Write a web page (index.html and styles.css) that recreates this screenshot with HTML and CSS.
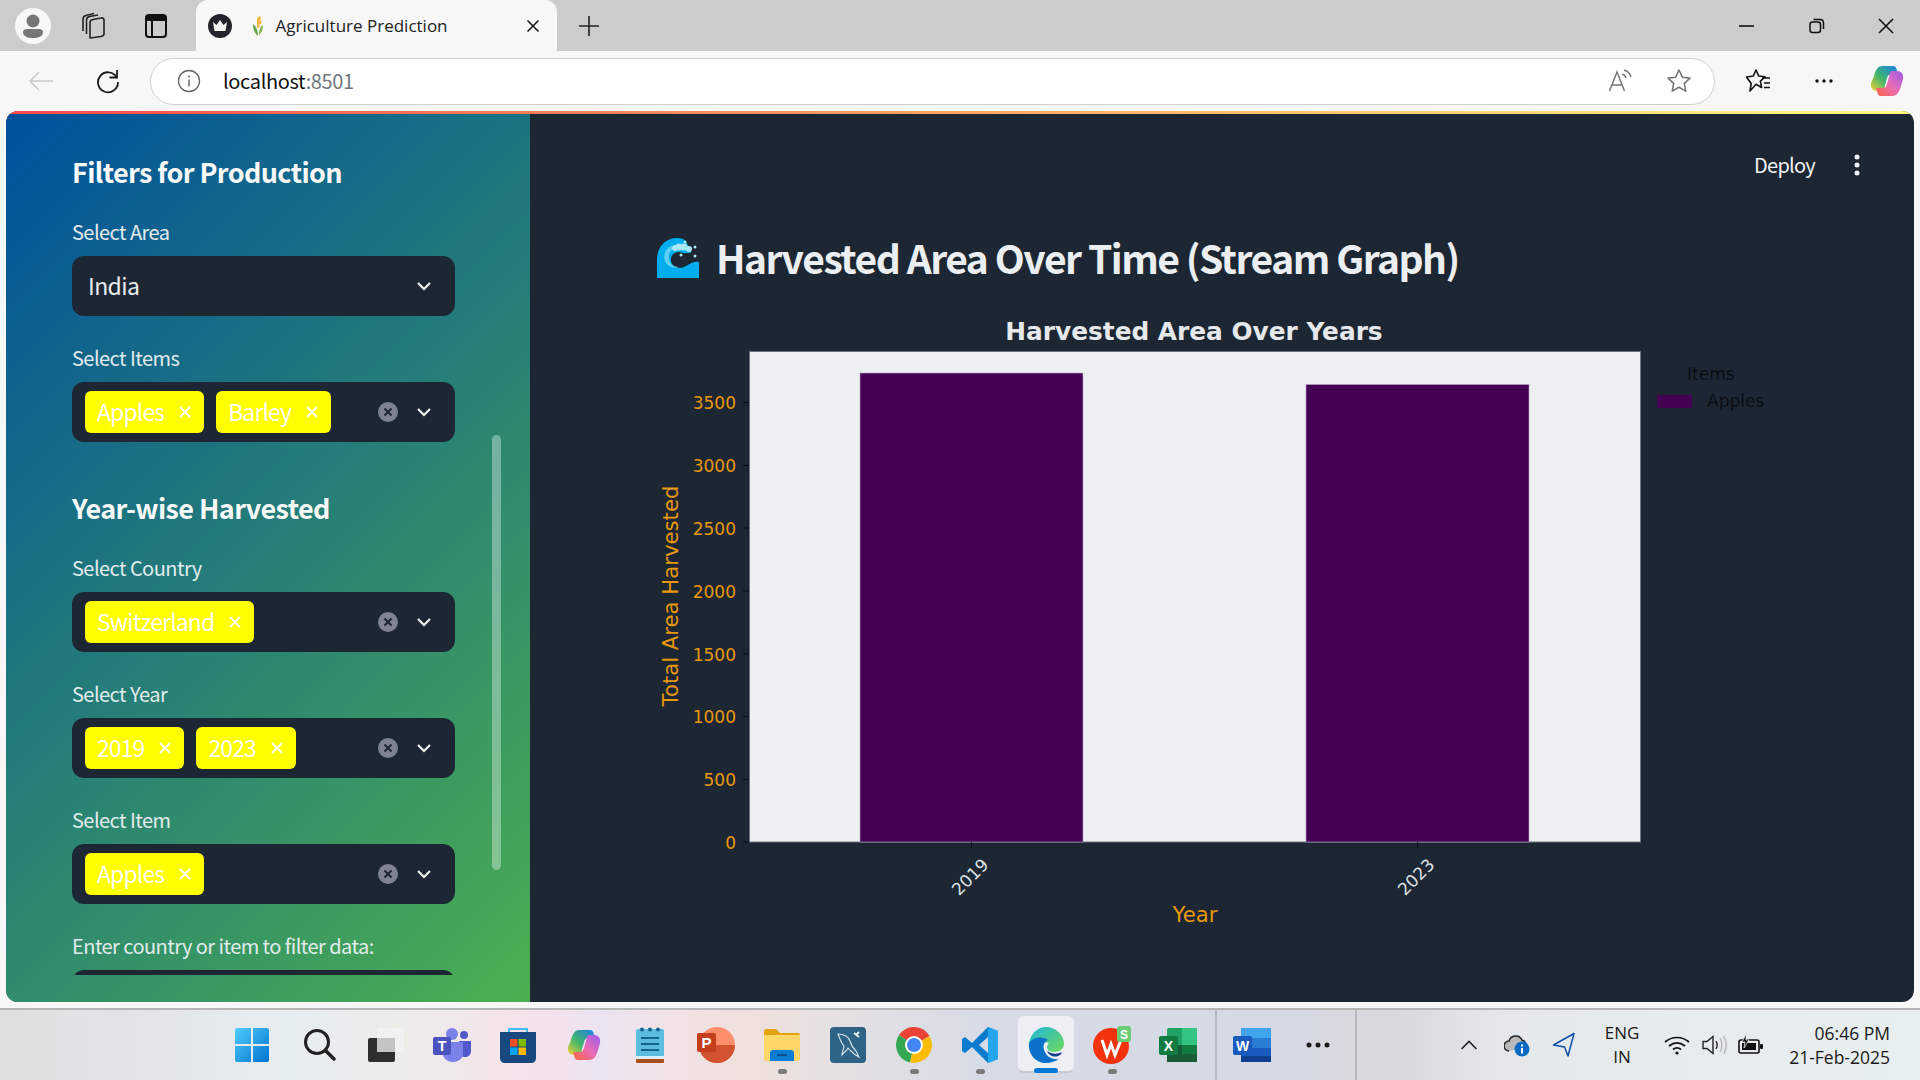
FILE: index.html
```html
<!DOCTYPE html>
<html lang="en">
<head>
    <meta charset="UTF-8">
    <meta name="viewport" content="width=device-width, initial-scale=1.0">
    <title>Agriculture Prediction</title>
    <link rel="stylesheet" href="styles.css">
</head>
<body>
    <!-- browser tab strip -->
    <div class="tabstrip">
        <div class="slot slot-avatar">
            <svg width="36" height="36" viewBox="0 0 36 36"><circle cx="18" cy="18" r="18" fill="#f7f7f7"/><circle cx="18" cy="13" r="6.5" fill="#777"/><path d="M8 24c0-2 2-3 4-3h12c2 0 4 1 4 3 0 4-4 6-10 6s-10-2-10-6z" fill="#777"/></svg>
        </div>
        <div class="slot slot-collections">
            <svg width="26" height="28" viewBox="0 0 26 28" fill="none" stroke="#222" stroke-width="1.6" stroke-linejoin="round"><path d="M10 26l11-1.5c2-.3 3-1.5 3-3V8c0-1.5-1.5-2.500-3-2l-8 1.5c-2 .4-3 1.500-3 3z"/><path d="M6.5 22V8c0-2 1-3 3-3.500L18 3"/><path d="M3 19V7c0-2 1-3 3-3.500L14 1.5"/></svg>
        </div>
        <div class="slot slot-panel">
            <svg width="24" height="26" viewBox="0 0 24 26"><rect x="2" y="2" width="20" height="22" rx="3" fill="none" stroke="#111" stroke-width="2"/><rect x="2" y="2" width="20" height="6" fill="#111"/><path d="M8 8v16" stroke="#111" stroke-width="2"/></svg>
        </div>
        <div class="tab">
            <svg class="tab-crown" width="24" height="24" viewBox="0 0 24 24"><circle cx="12" cy="12" r="12" fill="#23252e"/><path d="M5 8l3.5 3L12 6l3.5 5L19 8l-1.5 9h-11z" fill="#f2f2f2"/></svg>
            <svg class="tab-favicon" width="14" height="22" viewBox="0 0 14 22"><path d="M7 21C3 18 2 13 2 9c3 2 5 6 5 12z" fill="#6aa84f"/><path d="M8 20c3-3 4-6 4-10-3 2-4 5-4 10z" fill="#7cb342"/><path d="M6 13V3l3-2 1 3-1 2 2 0-1 3-2 1 1 1-1 2z" fill="#f4b942"/></svg>
            <span class="tab-title">Agriculture Prediction</span>
            <span class="tab-close">
                <svg width="14" height="14" viewBox="0 0 14 14"><path d="M1.5 1.5l11 11M12.5 1.5l-11 11" stroke="#111" stroke-width="1.5"/></svg>
            </span>
        </div>
        <div class="slot slot-new">
            <svg width="22" height="22" viewBox="0 0 22 22"><path d="M11 1v20M1 11h20" stroke="#222" stroke-width="1.6"/></svg>
        </div>
        <div class="spacer"></div>
        <div class="slot slot-win">
            <svg width="16" height="16" viewBox="0 0 16 16"><path d="M0 8h15" stroke="#111" stroke-width="1.6"/></svg>
        </div>
        <div class="slot slot-win">
            <svg width="16" height="16" viewBox="0 0 16 16" fill="none" stroke="#111" stroke-width="1.5"><rect x="1" y="4" width="10.5" height="10.5" rx="2.5"/><path d="M4.5 1.5h6.500c2 0 3.500 1.500 3.500 3.500v6"/></svg>
        </div>
        <div class="slot slot-win slot-win-last">
            <svg width="16" height="16" viewBox="0 0 16 16"><path d="M1 1l14 14M15 1L1 15" stroke="#111" stroke-width="1.6"/></svg>
        </div>
    </div>

    <!-- address bar -->
    <div class="toolbar">
        <div class="slot slot-back">
            <svg width="26" height="22" viewBox="0 0 26 22" fill="none" stroke="#c9c9c9" stroke-width="1.6"><path d="M25 11H2M11 2l-9 9 9 9"/></svg>
        </div>
        <div class="slot slot-reload">
            <svg width="26" height="26" viewBox="0 0 26 26" fill="none" stroke="#1a1a1a" stroke-width="1.8"><path d="M21.5 9A10 10 0 1 0 23 14"/><path d="M22 2v7.5h-7.5"/></svg>
        </div>
        <div class="address">
            <svg class="addr-info" width="24" height="24" viewBox="0 0 24 24"><circle cx="12" cy="12" r="10.5" fill="none" stroke="#666" stroke-width="1.3"/><path d="M12 10.5v7" stroke="#666" stroke-width="1.5"/><circle cx="12" cy="7.5" r="1" fill="#666"/></svg>
            <span class="addr-url"><span class="addr-host">localhost</span><span class="addr-port">:8501</span></span>
            <div class="spacer"></div>
            <svg class="addr-read" width="26" height="24" viewBox="0 0 26 24" fill="none" stroke="#777" stroke-width="1.5"><path d="M1.5 22L9 3l7.500 19M4 16h10"/><path d="M14 5c2 .5 3.500 2 4 4M16 1c3.500 1 6 3.500 7 7"/></svg>
            <svg class="addr-star" width="26" height="26" viewBox="0 0 26 26" fill="none" stroke="#777" stroke-width="1.6" stroke-linejoin="round"><path d="M13 2l3.300 7.200 7.700.9-5.700 5.300 1.500 7.700L13 19.200 6.200 23.100l1.500-7.700L2 10.100l7.700-.9z"/></svg>
        </div>
        <div class="slot slot-tool slot-fav">
            <svg width="26" height="26" viewBox="0 0 26 26" fill="none" stroke="#111" stroke-width="1.6" stroke-linejoin="round"><path d="M11 2l2.700 6 6.300.8-4.600 4.300 1.200 6.400L11 16.300 5 23l1.200-7.500L1.5 9l6.800-1z"/><path d="M17 10h8M19 15h6M19 19.5h6"/></svg>
        </div>
        <div class="slot slot-tool">
            <svg width="20" height="6" viewBox="0 0 20 6" fill="#111"><circle cx="3" cy="3" r="1.7"/><circle cx="10" cy="3" r="1.7"/><circle cx="17" cy="3" r="1.7"/></svg>
        </div>
        <div class="slot slot-tool slot-copilot">
            <svg width="34" height="32" viewBox="0 0 34 32">
                <defs>
                    <linearGradient id="cop1" x1="0" y1="1" x2="1" y2="0"><stop offset="0" stop-color="#f5d33c"/><stop offset=".45" stop-color="#3fb56b"/><stop offset="1" stop-color="#1b7ff0"/></linearGradient>
                    <linearGradient id="cop2" x1="0" y1="1" x2="1" y2="0"><stop offset="0" stop-color="#f8663c"/><stop offset=".5" stop-color="#e86cb8"/><stop offset="1" stop-color="#9a5be8"/></linearGradient>
                </defs>
                <path d="M12 1h11c2 0 3 1 3.500 3L28 9h-6c-3 0-4 1-5 4l-3 11c-.5 1.500-1.500 2-3 2H7c-4 0-7-3-6-8l3-7c1.500-6 4-10 8-10z" fill="url(#cop1)"/>
                <path d="M22 31H11c-2 0-3-1-3.500-3L6 23h6c3 0 4-1 5-4l3-11c.5-1.500 1.500-2 3-2h4c4 0 7 3 6 8l-2 7c-1.500 6-4 10-9 10z" fill="url(#cop2)"/>
            </svg>
        </div>
    </div>

    <!-- streamlit app -->
    <div class="app">
        <div class="decoration"></div>
        <div class="app-body">
            <aside class="sidebar">
                <div class="sidebar-scroll">
                    <h2 class="side-heading">Filters for Production</h2>
                    <div class="field">
                        <label class="field-label">Select Area</label>
                        <div class="select">
                            <span class="select-value">India</span>
                            <svg class="chevron" width="16" height="10" viewBox="0 0 16 10"><path d="M2 2l6 6 6-6" fill="none" stroke="#f2f2f2" stroke-width="2.2"/></svg>
                        </div>
                    </div>
                    <div class="field">
                        <label class="field-label">Select Items</label>
                        <div class="select">
                            <span class="tag">Apples<svg class="tag-x" width="12" height="12" viewBox="0 0 12 12"><path d="M1 1l10 10M11 1L1 11" stroke="#fff" stroke-width="2"/></svg></span>
                            <span class="tag">Barley<svg class="tag-x" width="12" height="12" viewBox="0 0 12 12"><path d="M1 1l10 10M11 1L1 11" stroke="#fff" stroke-width="2"/></svg></span>
                            <svg class="clear" width="20" height="20" viewBox="0 0 20 20"><circle cx="10" cy="10" r="10" fill="#7f8392"/><path d="M6.5 6.5l7 7M13.5 6.5l-7 7" stroke="#1c2733" stroke-width="2"/></svg>
                            <svg class="chevron" width="16" height="10" viewBox="0 0 16 10"><path d="M2 2l6 6 6-6" fill="none" stroke="#f2f2f2" stroke-width="2.2"/></svg>
                        </div>
                    </div>
                    <h2 class="side-heading side-heading-second">Year-wise Harvested</h2>
                    <div class="field">
                        <label class="field-label">Select Country</label>
                        <div class="select">
                            <span class="tag">Switzerland<svg class="tag-x" width="12" height="12" viewBox="0 0 12 12"><path d="M1 1l10 10M11 1L1 11" stroke="#fff" stroke-width="2"/></svg></span>
                            <svg class="clear" width="20" height="20" viewBox="0 0 20 20"><circle cx="10" cy="10" r="10" fill="#7f8392"/><path d="M6.5 6.5l7 7M13.5 6.5l-7 7" stroke="#1c2733" stroke-width="2"/></svg>
                            <svg class="chevron" width="16" height="10" viewBox="0 0 16 10"><path d="M2 2l6 6 6-6" fill="none" stroke="#f2f2f2" stroke-width="2.2"/></svg>
                        </div>
                    </div>
                    <div class="field">
                        <label class="field-label">Select Year</label>
                        <div class="select">
                            <span class="tag">2019<svg class="tag-x" width="12" height="12" viewBox="0 0 12 12"><path d="M1 1l10 10M11 1L1 11" stroke="#fff" stroke-width="2"/></svg></span>
                            <span class="tag">2023<svg class="tag-x" width="12" height="12" viewBox="0 0 12 12"><path d="M1 1l10 10M11 1L1 11" stroke="#fff" stroke-width="2"/></svg></span>
                            <svg class="clear" width="20" height="20" viewBox="0 0 20 20"><circle cx="10" cy="10" r="10" fill="#7f8392"/><path d="M6.5 6.5l7 7M13.5 6.5l-7 7" stroke="#1c2733" stroke-width="2"/></svg>
                            <svg class="chevron" width="16" height="10" viewBox="0 0 16 10"><path d="M2 2l6 6 6-6" fill="none" stroke="#f2f2f2" stroke-width="2.2"/></svg>
                        </div>
                    </div>
                    <div class="field">
                        <label class="field-label">Select Item</label>
                        <div class="select">
                            <span class="tag">Apples<svg class="tag-x" width="12" height="12" viewBox="0 0 12 12"><path d="M1 1l10 10M11 1L1 11" stroke="#fff" stroke-width="2"/></svg></span>
                            <svg class="clear" width="20" height="20" viewBox="0 0 20 20"><circle cx="10" cy="10" r="10" fill="#7f8392"/><path d="M6.5 6.5l7 7M13.5 6.5l-7 7" stroke="#1c2733" stroke-width="2"/></svg>
                            <svg class="chevron" width="16" height="10" viewBox="0 0 16 10"><path d="M2 2l6 6 6-6" fill="none" stroke="#f2f2f2" stroke-width="2.2"/></svg>
                        </div>
                    </div>
                    <div class="field">
                        <label class="field-label">Enter country or item to filter data:</label>
                        <div class="select"></div>
                    </div>
                </div>
                <div class="side-scrollbar"></div>
            </aside>

            <main class="main">
                <div class="main-header">
                    <span class="deploy">Deploy</span>
                    <svg class="kebab" width="6" height="22" viewBox="0 0 6 22" fill="#f0f2f4"><circle cx="3" cy="3" r="2.5"/><circle cx="3" cy="11" r="2.5"/><circle cx="3" cy="19" r="2.5"/></svg>
                </div>
                <div class="page-title">
                    <svg class="wave" width="42" height="40" viewBox="0 0 42 40">
                        <path d="M0 40V22C0 8 9 0 20 0c4 0 7 1 9 3l5 12-8 0c-6-3-13 1-12 8 1 6 8 9 15 5 5-3 9-5 13-4v16z" fill="#00aeef"/>
                        <path d="M14 8C8 11 6 17 8 23c2 5 8 8 14 6-6 0-9-3-10-8-1-5 1-9 6-11z" fill="#5fd0f5"/>
                        <g fill="#a9e9f7">
                            <circle cx="18" cy="10" r="3"/><circle cx="22" cy="9" r="3.5"/><circle cx="27" cy="9" r="3.5"/><circle cx="32" cy="11" r="3"/><circle cx="28" cy="4" r="1.5"/><circle cx="38" cy="9" r="1.5"/><circle cx="38" cy="18" r="1.5"/><circle cx="24" cy="17" r="1.5"/>
                        </g>
                    </svg>
                    <h1 class="page-title-text">Harvested Area Over Time (Stream Graph)</h1>
                </div>

                <!-- viewBox is in page coordinates so the axis numbers read off the reference -->
                <svg class="chart" width="1200" height="630" viewBox="657 310 1200 630">
                    <text class="chart-title" x="1194" y="340" text-anchor="middle">Harvested Area Over Years</text>
                    <rect x="749.5" y="351.5" width="891" height="490.5" fill="#ecf0f1" stroke="#6c7580"/>
                    <rect x="860" y="373" width="223" height="469" fill="#440154" stroke="#b9a3c4" stroke-width=".6"/>
                    <rect x="1306" y="384.5" width="223" height="457.5" fill="#440154" stroke="#b9a3c4" stroke-width=".6"/>

                    <g stroke="#0b0f14" stroke-width="1">
                        <path d="M743 842h6M743 779.500h6M743 716.500h6M743 654h6M743 591h6M743 528h6M743 465.500h6M743 402.500h6"/>
                        <path d="M971.500 842v6M1417.500 842v6"/>
                    </g>
                    <g class="y-ticks" text-anchor="end">
                        <text x="736" y="849">0</text>
                        <text x="736" y="786">500</text>
                        <text x="736" y="723">1000</text>
                        <text x="736" y="661">1500</text>
                        <text x="736" y="598">2000</text>
                        <text x="736" y="535">2500</text>
                        <text x="736" y="472">3000</text>
                        <text x="736" y="409">3500</text>
                    </g>
                    <text class="x-tick" x="970" y="883" text-anchor="middle" transform="rotate(-45 970 877)">2019</text>
                    <text class="x-tick" x="1416" y="883" text-anchor="middle" transform="rotate(-45 1416 877)">2023</text>
                    <text class="axis-label" x="1195" y="922" text-anchor="middle">Year</text>
                    <text class="axis-label" x="678" y="596" text-anchor="middle" transform="rotate(-90 678 596)">Total Area Harvested</text>

                    <text class="legend-text" x="1687" y="380">Items</text>
                    <rect x="1657" y="395" width="35" height="13" fill="#440154"/>
                    <text class="legend-text" x="1707" y="407">Apples</text>
                </svg>
            </main>
        </div>
    </div>

    <!-- windows taskbar -->
    <div class="taskbar">
        <div class="task-slot">
            <svg class="task-win" width="36" height="36" viewBox="0 0 36 36"><defs><linearGradient id="win" x1="0" y1="0" x2="1" y2="1"><stop offset="0" stop-color="#50cdfb"/><stop offset="1" stop-color="#0273d1"/></linearGradient></defs><path d="M1 3a2 2 0 0 1 2-2h14v16H1zM19 1h14a2 2 0 0 1 2 2v14H19zM1 19h16v16H3a2 2 0 0 1-2-2zM19 19h16v14a2 2 0 0 1-2 2H19z" fill="url(#win)"/></svg>
        </div>
        <div class="task-slot">
            <svg width="34" height="34" viewBox="0 0 34 34" fill="none" stroke="#222" stroke-width="3"><circle cx="14" cy="14" r="11.5"/><path d="M23 23l8 8" stroke-linecap="round" stroke-width="3.5"/></svg>
        </div>
        <div class="task-slot">
            <svg width="36" height="34" viewBox="0 0 36 34"><rect x="0" y="10" width="27" height="24" rx="2" fill="#2e2e2e"/><rect x="9" y="0" width="27" height="24" rx="2" fill="#f2f2f2" fill-opacity=".8"/><rect x="9" y="10" width="18" height="14" fill="#c4c4c4"/></svg>
        </div>
        <div class="task-slot">
            <svg width="38" height="34" viewBox="0 0 38 34"><circle cx="19" cy="6" r="6" fill="#7b83eb"/><circle cx="31" cy="7" r="4" fill="#5059c9"/><path d="M26 13h12v10c0 4-3 6-6 6s-6-2-6-6z" fill="#5059c9"/><path d="M10 14h20v12c0 4-4 8-10 8s-10-4-10-8z" fill="#7b83eb"/><rect x="0" y="9" width="18" height="18" rx="2" fill="#4b53bc"/><text class="teams-t" x="9" y="23" text-anchor="middle">T</text></svg>
        </div>
        <div class="task-slot">
            <svg width="36" height="36" viewBox="0 0 36 36"><path d="M9 6V2h18v4" fill="none" stroke="#3fc0ee" stroke-width="2"/><path d="M0 5h36v26c0 3-2 5-5 5H5c-3 0-5-2-5-5z" fill="#17487f"/><rect x="10" y="12" width="7.5" height="7.5" fill="#f25022"/><rect x="18.5" y="12" width="7.5" height="7.5" fill="#7fba00"/><rect x="10" y="20.5" width="7.5" height="7.5" fill="#00a4ef"/><rect x="18.5" y="20.5" width="7.5" height="7.5" fill="#ffb900"/></svg>
        </div>
        <div class="task-slot">
            <svg width="34" height="32" viewBox="0 0 34 32"><path d="M12 1h11c2 0 3 1 3.500 3L28 9h-6c-3 0-4 1-5 4l-3 11c-.5 1.500-1.500 2-3 2H7c-4 0-7-3-6-8l3-7c1.500-6 4-10 8-10z" fill="url(#cop1)"/><path d="M22 31H11c-2 0-3-1-3.500-3L6 23h6c3 0 4-1 5-4l3-11c.5-1.500 1.500-2 3-2h4c4 0 7 3 6 8l-2 7c-1.500 6-4 10-9 10z" fill="url(#cop2)"/></svg>
        </div>
        <div class="task-slot">
            <svg width="28" height="36" viewBox="0 0 28 36"><rect x="0" y="2" width="28" height="29" rx="2" fill="#5cbce0"/><rect x="0" y="31" width="28" height="5" rx="1" fill="#a8501a"/><rect x="0" y="29" width="28" height="3" fill="#d9eef6"/><g fill="#11658e"><circle cx="6" cy="2.5" r="2"/><circle cx="14" cy="2.5" r="2"/><circle cx="22" cy="2.5" r="2"/><rect x="5" y="10" width="18" height="2"/><rect x="5" y="16" width="18" height="2"/><rect x="5" y="22" width="18" height="2"/></g></svg>
        </div>
        <div class="task-slot">
            <svg width="38" height="38" viewBox="0 0 38 38"><circle cx="20" cy="19" r="18" fill="#ff8f6b"/><path d="M2 19h36a18 18 0 0 1-36 0z" fill="#d35230"/><rect x="0" y="7" width="19" height="19" rx="2" fill="#c43e1c"/><text class="ppt-p" x="9.5" y="22" text-anchor="middle">P</text></svg>
        </div>
        <div class="task-slot task-running">
            <svg width="36" height="32" viewBox="0 0 36 32"><path d="M0 2a2 2 0 0 1 2-2h10l4 4h18a2 2 0 0 1 2 2v4H0z" fill="#e2a40d"/><path d="M0 6h36v24a2 2 0 0 1-2 2H2a2 2 0 0 1-2-2z" fill="#fcd669"/><path d="M6 32V24a3 3 0 0 1 3-3h18a3 3 0 0 1 3 3v8z" fill="#0c7dd4"/><rect x="13" y="25" width="10" height="2" fill="#064e8e"/></svg>
        </div>
        <div class="task-slot">
            <svg width="36" height="36" viewBox="0 0 36 36"><rect width="36" height="36" rx="4" fill="#2d6385"/><path d="M8 7c6 0 10 2 12 7 1 4 3 7 6 10l3 6-5-3c-2-3-4-3-6-6-2 4-4 4-6 7 0-4 2-6 2-9-2-2-3-4-4-7z" fill="none" stroke="#d8e4ea" stroke-width="1.1"/><path d="M24 6l5 4M29 5l-2 2" stroke="#e8f0f4" stroke-width="2"/></svg>
        </div>
        <div class="task-slot task-running">
            <svg width="36" height="36" viewBox="0 0 36 36"><path d="M18 18L33.600 9A18 18 0 0 0 3 8z" fill="#ea4335"/><path d="M18 18L3 8A18 18 0 0 0 14 35.500z" fill="#34a853"/><path d="M18 18l-4 17.500A18 18 0 0 0 33.600 9z" fill="#fbbc05"/><circle cx="18" cy="18" r="9" fill="#fff"/><circle cx="18" cy="18" r="7" fill="#4285f4"/></svg>
        </div>
        <div class="task-slot task-running">
            <svg width="36" height="36" viewBox="0 0 36 36"><path d="M26 0l10 4v28l-10 4L10 20 3 26l-3-2V12l3-2 7 6zM26 10l-9 8 9 8z" fill="#0a7cd0" fill-rule="evenodd"/><path d="M26 0l10 4v28l-10 4z" fill="#24a7ee"/></svg>
        </div>
        <div class="task-slot task-active">
            <svg width="36" height="36" viewBox="0 0 36 36"><defs><linearGradient id="edge1" x1="0" y1="0" x2="1" y2="1"><stop offset="0" stop-color="#1fb4d8"/><stop offset="1" stop-color="#6fdc5c"/></linearGradient></defs><path d="M1 16C3 6 10 0 18 0c10 0 18 8 18 17 0 5-5 8-10 8-4 0-7-2-7-5 0-2 1-3 2-4-6-2-14 0-20 0z" fill="url(#edge1)"/><path d="M1 16c4-6 13-7 19-3-4 2-6 6-3 12 2 5 8 8 14 7-3 2-8 4-13 4C8 36 0 28 1 16z" fill="#0a71c9"/><path d="M19 24c2 5 9 8 14 3l1-2c-4 2-8 2-11 1z" fill="#123f86"/></svg>
        </div>
        <div class="task-slot task-running">
            <svg width="38" height="38" viewBox="0 0 38 38"><circle cx="18" cy="20" r="18" fill="#f2330d"/><path d="M9 14l5 15 4-11 4 11 6-15" fill="none" stroke="#fff" stroke-width="3"/><rect x="24" y="0" width="14" height="16" rx="3" fill="#6ccb75"/><text class="wps-s" x="31" y="13" text-anchor="middle">S</text></svg>
        </div>
        <div class="task-slot">
            <svg width="38" height="34" viewBox="0 0 38 34"><rect x="8" y="0" width="30" height="34" rx="2" fill="#21a366"/><rect x="8" y="17" width="30" height="17" fill="#185c37"/><rect x="23" y="0" width="15" height="17" fill="#33c481"/><rect x="23" y="17" width="15" height="9" fill="#107c41"/><rect x="0" y="8" width="19" height="19" rx="2" fill="#107c41"/><text class="ms-letter" x="9.5" y="23" text-anchor="middle">X</text></svg>
        </div>
        <div class="task-divider"></div>
        <div class="task-slot">
            <svg width="38" height="34" viewBox="0 0 38 34"><rect x="8" y="0" width="30" height="34" rx="2" fill="#2b7cd3"/><rect x="8" y="0" width="30" height="10" fill="#41a5ee"/><rect x="8" y="20" width="30" height="14" fill="#185abd"/><rect x="8" y="28" width="30" height="6" fill="#103f91"/><rect x="0" y="8" width="19" height="19" rx="2" fill="#185abd"/><text class="ms-letter" x="9.5" y="23" text-anchor="middle">W</text></svg>
        </div>
        <div class="task-slot">
            <svg width="24" height="6" viewBox="0 0 24 6" fill="#1c1c1c"><circle cx="3" cy="3" r="2.5"/><circle cx="12" cy="3" r="2.5"/><circle cx="21" cy="3" r="2.5"/></svg>
        </div>
        <div class="task-divider"></div>
        <div class="spacer"></div>
        <div class="tray tray-wide">
            <svg width="18" height="10" viewBox="0 0 18 10"><path d="M1.5 9L9 1.5 16.5 9" fill="none" stroke="#222" stroke-width="1.6"/></svg>
        </div>
        <div class="tray tray-wide">
            <svg width="26" height="24" viewBox="0 0 26 24"><path d="M5 18a5 5 0 0 1 0-10 7 7 0 0 1 13-1 5 5 0 0 1 3 8" fill="#b9b9b9" stroke="#222" stroke-width="1.5"/><circle cx="18" cy="16" r="7.5" fill="#0a6cc4"/><rect x="17" y="15" width="2" height="5.5" fill="#fff"/><rect x="17" y="11.5" width="2" height="2" fill="#fff"/></svg>
        </div>
        <div class="tray tray-loc">
            <svg width="24" height="26" viewBox="0 0 24 26"><path d="M1.5 13L22 1.5 16 24l-3.500-9z" fill="none" stroke="#0e4fa8" stroke-width="1.5" stroke-linejoin="round"/></svg>
        </div>
        <div class="tray tray-lang">ENG<br>IN</div>
        <div class="tray tray-wifi">
            <svg width="26" height="20" viewBox="0 0 26 20" fill="none" stroke="#111" stroke-width="1.7"><path d="M1 7c7-6 17-6 24 0M5 11c5-4 11-4 16 0M9 14.500c2.500-2 5.500-2 8 0"/><circle cx="13" cy="18" r="1.6" fill="#111" stroke="none"/></svg>
        </div>
        <div class="tray tray-small">
            <svg width="26" height="22" viewBox="0 0 26 22" fill="none" stroke="#222" stroke-width="1.4"><path d="M1 7.500h4l6-5v17l-6-5H1z"/><path d="M14 7c1.500 2.500 1.500 5.500 0 8"/><path d="M18 4c2.500 4 2.500 10 0 14M21.500 2c3.500 5.500 3.500 12.500 0 18" stroke="#b8b8b8"/></svg>
        </div>
        <div class="tray tray-small">
            <svg width="26" height="22" viewBox="0 0 26 22"><rect x="1" y="6" width="20" height="13" rx="2" fill="none" stroke="#111" stroke-width="1.6"/><rect x="4" y="9" width="14" height="7" fill="#111"/><rect x="22" y="10" width="3" height="5" rx="1" fill="#111"/><path d="M8 0L4 8h3l-1 6 5-8H8z" fill="#111" stroke="#e8eef0" stroke-width=".8"/></svg>
        </div>
        <div class="clock">06:46 PM<br>21-Feb-2025</div>
    </div>
</body>
</html>
```

FILE: styles.css
```css
* {
    box-sizing: border-box;
}
body {
    margin: 0;
    width: 1920px;
    height: 1080px;
    overflow: hidden;
    display: flex;
    flex-direction: column;
    background: #f7f7f7;
    font-family: "Noto Sans CJK SC", "Noto Sans", sans-serif;
}
.spacer {
    flex: 1;
}
.slot {
    display: flex;
    align-items: center;
    justify-content: center;
    flex: none;
}

/* tab strip */
.tabstrip {
    height: 51px;
    flex: none;
    display: flex;
    align-items: stretch;
    padding-left: 8px;
    background: #cccccc;
}
.slot-avatar {
    width: 50px;
}
.slot-collections {
    width: 70px;
}
.slot-panel {
    width: 55px;
    margin-right: 13px;
}
.tab {
    width: 361px;
    display: flex;
    align-items: center;
    padding-left: 12px;
    background: #f7f7f7;
    border-radius: 12px 12px 0 0;
}
.tab-favicon {
    margin-left: 19px;
}
.tab-title {
    flex: 1;
    margin-left: 10.5px;
    font-family: "Open Sans", sans-serif;
    font-size: 17px;
    color: #222;
}
.tab-close {
    width: 48px;
    display: flex;
    justify-content: center;
}
.slot-new {
    width: 64px;
}
.slot-win {
    width: 70px;
}
.slot-win-last {
    width: 68px;
}

/* address bar */
.toolbar {
    height: 60px;
    flex: none;
    display: flex;
    align-items: center;
    background: #f7f7f7;
    padding-left: 16px;
}
.slot-back {
    width: 50px;
}
.slot-reload {
    width: 50px;
    margin-left: 17px;
    margin-right: 17px;
}
.address {
    width: 1565px;
    height: 47px;
    display: flex;
    align-items: center;
    padding-left: 26px;
    padding-right: 22px;
    background: #fff;
    border: 1.5px solid #d0d0d0;
    border-radius: 24px;
}
.addr-info {
    margin-right: 22px;
}
.addr-url {
    padding-bottom: 2px;
    font-size: 20px;
    letter-spacing: -0.35px;
}
.addr-host {
    color: #111;
}
.addr-port {
    color: #6f7680;
}
.addr-star {
    margin-left: 32px;
}
.slot-tool {
    width: 66px;
}
.slot-fav {
    margin-left: 10px;
}
.slot-copilot {
    width: 60px;
}

/* app frame */
.app {
    height: 891px;
    width: 1908px;
    flex: none;
    margin-left: 6px;
    display: flex;
    flex-direction: column;
    border-radius: 12px;
    overflow: hidden;
    background: #1c2733;
}
.decoration {
    height: 3px;
    flex: none;
    background: linear-gradient(90deg, #ff4b4b, #fffd80);
}
.app-body {
    flex: 1;
    display: flex;
    min-height: 0;
}

/* sidebar */
.sidebar {
    position: relative;
    width: 524px;
    flex: none;
    background: linear-gradient(135deg, #00509d, #4caf50);
}
.sidebar-scroll {
    height: 861px;
    overflow: hidden;
    padding: 39px 75px 0 66px;
}
.side-heading {
    margin: 0 0 27px;
    height: 40px;
    font-size: 27px;
    font-weight: 600;
    line-height: 38px;
    letter-spacing: -0.6px;
    color: #fafafa;
}
.side-heading-second {
    margin-top: 47px;
}
.field {
    margin-bottom: 30px;
}
.field-label {
    display: block;
    height: 24px;
    margin-bottom: 12px;
    font-size: 20px;
    line-height: 23px;
    letter-spacing: -0.55px;
    color: #e2ebec;
}
.select {
    height: 60px;
    display: flex;
    align-items: center;
    gap: 12px;
    padding: 0 23px 0 13px;
    background: #1c2733;
    border-radius: 12px;
}
.select-value {
    flex: 1;
    padding-left: 3px;
    padding-bottom: 3px;
    font-size: 23px;
    letter-spacing: -0.6px;
    color: #e8ecef;
}
.tag {
    height: 42px;
    display: flex;
    align-items: center;
    gap: 15px;
    padding: 0 13px 2px 12px;
    background: #ffff00;
    border-radius: 6px;
    font-size: 23px;
    line-height: 40px;
    letter-spacing: -0.9px;
    color: #fff;
}
.tag-x {
    margin-top: 2px;
}
.clear {
    margin-left: auto;
    margin-right: 6px;
}
.chevron {
    flex: none;
}
.side-scrollbar {
    position: absolute;
    left: 486px;
    top: 321px;
    width: 9px;
    height: 435px;
    border-radius: 5px;
    background: rgba(255, 255, 255, 0.35);
}

/* main column */
.main {
    flex: 1;
    padding-left: 127px;
    min-width: 0;
}
.main-header {
    height: 30px;
    margin-top: 36px;
    display: flex;
    align-items: center;
    justify-content: flex-end;
    padding-right: 54px;
}
.deploy {
    padding-bottom: 2px;
    font-size: 20px;
    letter-spacing: -0.75px;
    color: #f0f2f4;
}
.kebab {
    margin-left: 39px;
}
.page-title {
    height: 50px;
    margin-top: 53px;
    display: flex;
    align-items: center;
    gap: 17px;
}
.wave {
    flex: none;
}
.page-title-text {
    margin: 0;
    padding-bottom: 2px;
    font-size: 39px;
    font-weight: 600;
    line-height: 48px;
    letter-spacing: -1.5px;
    color: #eceff1;
}
.chart {
    display: block;
    margin-top: 27px;
    font-family: "DejaVu Sans", sans-serif;
}
.chart-title {
    font-size: 24.8px;
    font-weight: 700;
    fill: #e6e9ec;
}
.y-ticks text {
    font-size: 17px;
    fill: #e8980a;
}
.x-tick {
    font-size: 17px;
    fill: #dfe3e6;
}
.axis-label {
    font-size: 21.2px;
    fill: #e8980a;
}
.legend-text {
    font-size: 17px;
    fill: #0a0e12;
}

/* taskbar */
.taskbar {
    height: 72px;
    flex: none;
    margin-top: 6px;
    display: flex;
    align-items: stretch;
    padding-left: 221px;
    border-top: 2px solid #b5b5b5;
    background: linear-gradient(90deg, #dedede 0, #e6edf1 290px, #ecece8 400px, #f5e1ea 533px, #ece3f2 600px, #f2e3e4 680px, #eee0dc 760px, #dedfe5 900px, #d6dbe6 1000px, #d5d9e3 1300px, #d9d9db 1400px, #e4e8ea 1500px, #e8eff0 1900px);
}
.task-slot {
    position: relative;
    width: 66px;
    flex: none;
    display: flex;
    align-items: center;
    justify-content: center;
}
.task-win {
    margin-right: 4px;
}
.task-running::after {
    content: "";
    position: absolute;
    left: 29px;
    bottom: 6px;
    width: 9px;
    height: 5px;
    border-radius: 3px;
    background: #7a7a7a;
}
.task-active::before {
    content: "";
    position: absolute;
    left: 5px;
    right: 5px;
    top: 6px;
    bottom: 7px;
    border-radius: 6px;
    background: #edeff4;
    border-bottom: 2px solid #c5cad3;
}
.task-active::after {
    content: "";
    position: absolute;
    left: 21px;
    bottom: 7px;
    width: 24px;
    height: 5px;
    border-radius: 3px;
    background: #0078d4;
}
.task-active svg {
    position: relative;
}
.task-divider {
    width: 2px;
    flex: none;
    margin-left: 4px;
    margin-right: 2px;
    background: #b5b8bd;
}
.teams-t,
.ms-letter {
    font-family: "Liberation Sans", sans-serif;
    font-size: 14px;
    font-weight: 700;
    fill: #fff;
}
.ppt-p {
    font-family: "Liberation Sans", sans-serif;
    font-size: 15px;
    font-weight: 700;
    fill: #fff;
}
.wps-s {
    font-family: "Liberation Sans", sans-serif;
    font-size: 12px;
    font-weight: 700;
    fill: #fff;
}
.tray {
    flex: none;
    display: flex;
    align-items: center;
    justify-content: center;
}
.tray-wide {
    width: 48px;
}
.tray-loc {
    width: 46px;
}
.tray-lang {
    width: 70px;
    text-align: center;
    font-family: "Open Sans", sans-serif;
    font-size: 17px;
    line-height: 24px;
    color: #1a1a1a;
}
.tray-wifi {
    width: 40px;
}
.tray-small {
    width: 36px;
}
.clock {
    width: 121px;
    margin-right: 30px;
    display: flex;
    flex-direction: column;
    justify-content: center;
    text-align: right;
    font-family: "Open Sans", sans-serif;
    font-size: 17.5px;
    line-height: 24px;
    color: #1a1a1a;
}
```
